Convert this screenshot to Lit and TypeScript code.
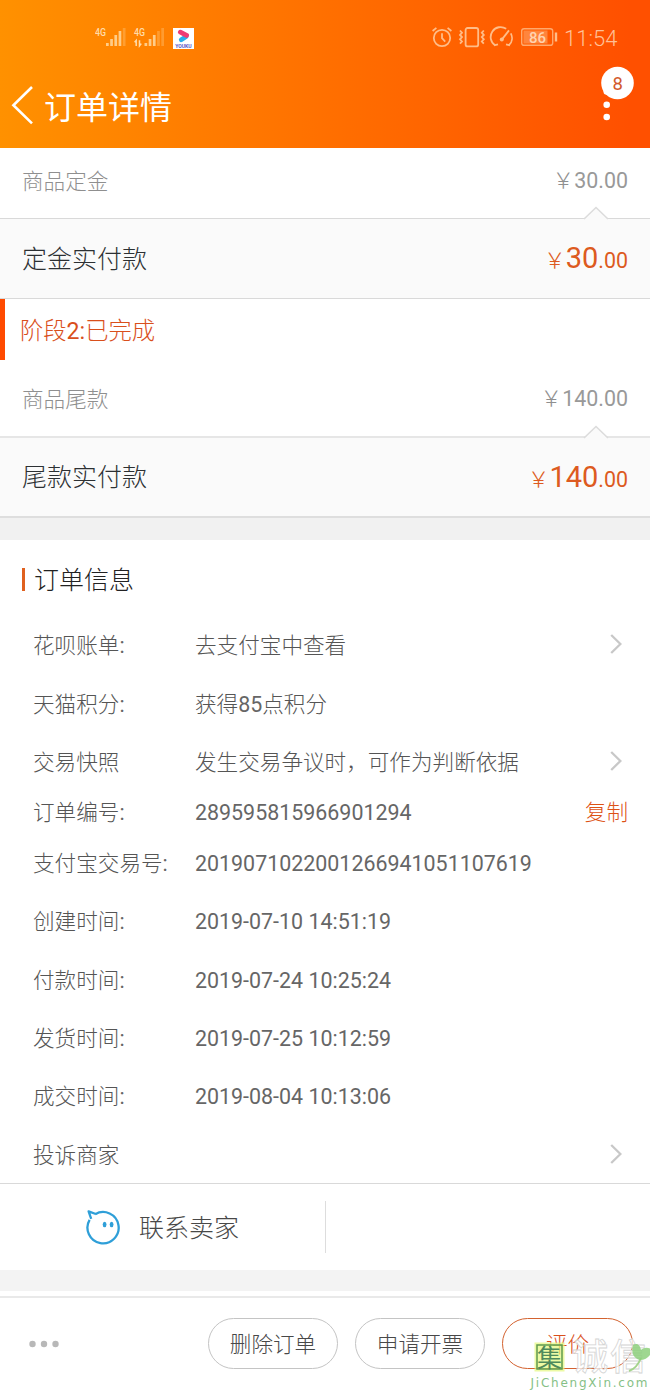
import { LitElement, html, css, svg, nothing } from "lit";
import { customElement, property } from "lit/decorators.js";
import { classMap } from "lit/directives/class-map.js";

const chevron = html`<svg class="chevron" width="12" height="20" viewBox="0 0 12 20">
  <path d="M1.2 1 10.4 10 1.2 19" fill="none" stroke="#c8c8c8" stroke-width="2.3" />
</svg>`;

const bars = (x: number, lit: number) => svg`${[3, 7, 11, 15, 18].map(
  (h, i) => svg`<rect x=${x + i * 4.2} y=${19 - h} width="2.7" height=${h} fill="#ffd9a0" opacity=${i < lit ? 0.85 : 0.3} />`
)}`;

// Latin runs are set in a heavier weight than the Chinese around them.
const mixed = (text: string) =>
  text
    .split(/([\x20-\x7e]+)/)
    .filter(Boolean)
    .map((part) => (/^[\x20-\x7e]/.test(part) ? html`<span class="latin">${part}</span>` : part));

const latin = css`
  .latin { font-weight: 400; font-size: 0.992em; }
`;

interface Row {
  label: string;
  value?: string;
  link?: boolean;
  copy?: boolean;
}

const ROWS: Row[] = [
  { label: "花呗账单:", value: "去支付宝中查看", link: true },
  { label: "天猫积分:", value: "获得85点积分" },
  { label: "交易快照", value: "发生交易争议时，可作为判断依据", link: true },
  { label: "订单编号:", value: "289595815966901294", copy: true },
  { label: "支付宝交易号:", value: "2019071022001266941051107619" },
  { label: "创建时间:", value: "2019-07-10 14:51:19" },
  { label: "付款时间:", value: "2019-07-24 10:25:24" },
  { label: "发货时间:", value: "2019-07-25 10:12:59" },
  { label: "成交时间:", value: "2019-08-04 10:13:06" },
  { label: "投诉商家", link: true },
];

@customElement("status-header")
class StatusHeader extends LitElement {
  static styles = css`
    :host {
      display: block;
      height: 148px;
      background: linear-gradient(90deg, #ff9100 0%, #ff5000 97%);
      color: #fff;
    }
    .status {
      display: flex;
      align-items: center;
      height: 76px;
      padding: 0 32px 0 95px;
      box-sizing: border-box;
    }
    .signals { display: block; }
    .net { font: 500 11.5px/1 Roboto, sans-serif; fill: #ffdcaa; }
    .app { margin-left: 7px; }
    .brand { font: 700 5px/1 Roboto, sans-serif; fill: #5a59c8; }
    .spacer { flex: 1; }
    .battery { font: 500 15px/1 Roboto, sans-serif; fill: #ffd3b0; }
    .clock {
      margin: 1px 0 0 6px;
      font-size: 22px;
      line-height: 24px;
      font-weight: 350;
      color: #ffc096;
      width: 54px;
      white-space: nowrap;
    }
    .bar {
      display: flex;
      align-items: center;
      height: 60px;
      padding: 0 16px 0 11px;
    }
    .title {
      margin: 3px 0 0 10px;
      font-size: 32px;
      line-height: 48px;
      font-weight: 400;
    }
    .more { display: block; align-self: flex-start; margin-top: -10px; }
    .count { font: 400 18.5px/1 Roboto, sans-serif; fill: #d2592b; }
  `;
  render() {
    return html`
      <div class="status">
        <svg class="signals" width="71" height="30" viewBox="0 -4 71 30">
          <text class="net" x="0" y="9" textLength="11" lengthAdjust="spacingAndGlyphs">4G</text>
          ${bars(11, 4)}
          <text class="net" x="39" y="9" textLength="11" lengthAdjust="spacingAndGlyphs">4G</text>
          <path d="M41.2 19v-5.5l-1.6 1.8M44.5 13.2v5.6l1.8-2.2" fill="none" stroke="#ffdcaa" stroke-width="1.5" />
          ${bars(49.5, 3)}
        </svg>
        <svg class="app" width="21" height="21" viewBox="0 0 21 21">
          <rect width="21" height="21" fill="#fff" />
          <path d="M13.2 8.6 8.2 11.8" stroke="#29aeea" stroke-width="4.6" stroke-linecap="round" />
          <path d="M7.4 4.2 13.6 7.4" stroke="#ee3c72" stroke-width="4.8" stroke-linecap="round" />
          <text class="brand" x="2.2" y="19.6" textLength="16.5" lengthAdjust="spacingAndGlyphs">YOUKU</text>
        </svg>
        <span class="spacer"></span>
        <svg width="128" height="24" viewBox="0 0 128 24" fill="none" stroke="#ffbd88" stroke-width="1.8">
          <circle cx="12" cy="12" r="8.2" />
          <path d="M12 7.2v5l3.2 3.4M2.6 5 6.4 1.9M21.4 5l-3.8-3.1" />
          <rect x="35.6" y="2" width="12.6" height="18.4" rx="2" />
          <path d="M30 4.5l2 2.2-2 2.2 2 2.2-2 2.2 2 2.2-2 2.2M53.8 4.5l-2 2.2 2 2.2-2 2.2 2 2.2-2 2.2 2 2.2" />
          <path d="M65 19.2A9.9 9.9 0 0 1 76.2 2.8M80.8 7.4A9.9 9.9 0 0 1 79 19.2M64 19.4l4-1M80 19.4l-4-1" />
          <path d="M72 13.4 79 4.4" />
          <circle cx="71.8" cy="13.6" r="2" fill="#ffbd88" stroke="none" />
          <rect x="91.7" y="2.7" width="31" height="16.6" rx="2.4" stroke-width="1.4" opacity=".8" />
          <rect x="93.5" y="4.5" width="24" height="13" fill="#ffb07a" stroke="none" opacity=".5" />
          <path d="M126 6.5v9" stroke-width="2.4" />
          <text class="battery" stroke="none" x="99" y="16.5">86</text>
        </svg>
        <span class="clock">11:54</span>
      </div>
      <div class="bar">
        <svg width="23" height="40" viewBox="0 0 23 40">
          <path d="M21 1 2.4 19.3 21 37.4" fill="none" stroke="#fff" stroke-width="2.6" />
        </svg>
        <h1 class="title">订单详情</h1>
        <span class="spacer"></span>
        <svg class="more" width="34" height="56" viewBox="0 0 34 56">
          <circle cx="17.5" cy="17" r="16.3" fill="#fff" />
          <circle cx="6.7" cy="25.4" r="3.2" fill="#fff" />
          <text class="count" x="17.8" y="23.8" text-anchor="middle">8</text>
          <circle cx="6.7" cy="38.8" r="3.3" fill="#fff" />
          <circle cx="6.7" cy="51" r="3.3" fill="#fff" />
        </svg>
      </div>
    `;
  }
}

@customElement("payment-block")
class PaymentBlock extends LitElement {
  @property() label = "";
  @property() paidLabel = "";
  @property() whole = "";
  @property({ type: Boolean }) soft = false;

  static styles = [
    latin,
    css`
      :host { display: block; }
      .due, .paid {
        display: flex;
        justify-content: space-between;
        align-items: center;
        padding: 0 22px;
        box-sizing: border-box;
      }
      .due {
        height: 70px;
        padding-bottom: 2px;
        color: #8f8f8f;
        font-size: 21.6px;
        line-height: 30px;
      }
      .amount { margin-top: -2px; }
      .paid {
        position: relative;
        height: 81px;
        padding-top: 2px;
        background: #fafafa;
        border-top: 1px solid #d9d9d9;
        border-bottom: 1px solid #d9d9d9;
        color: #2c3033;
        font-size: 25px;
        line-height: 36px;
      }
      .soft { border-top: 2px solid #e6e6e6; border-bottom: 2px solid #dedede; height: 82px; }
      .notch { position: absolute; right: 41px; top: -13px; }
      .total { color: #dd5a20; font-size: 21.6px; }
      .big { font-size: 29px; }
      .due .latin { color: #999; }
    `,
  ];
  render() {
    return html`
      <div class="due"><span>${this.label}</span><span class="amount">￥<span class="latin">${this.whole}.00</span></span></div>
      <div class=${classMap({ paid: true, soft: this.soft })}>
        <svg class="notch" width="26" height="14" viewBox="0 0 26 14">
          <path d="M1 13.5 13 1.5 25 13.5V14H1z" fill="#fafafa" />
          <path d="M1 13 13 1.5 25 13" fill="none" stroke="#dcdcdc" stroke-width="1.6" />
        </svg>
        <span>${this.paidLabel}</span>
        <span class="total">￥<span class="latin"><span class="big">${this.whole}</span>.00</span></span>
      </div>
    `;
  }
}

@customElement("order-info")
class OrderInfo extends LitElement {
  static styles = [
    latin,
    css`
      :host {
        display: block;
        box-sizing: border-box;
        height: 644px;
        border-bottom: 1px solid #d9d9d9;
      }
      .head {
        display: flex;
        align-items: center;
        height: 76px;
        box-sizing: border-box;
        padding: 6px 22px 0;
      }
      .mark { width: 3px; height: 23px; background: #e0611f; margin: -4px 9px 0 0; }
      .heading { margin: 0; font-size: 25px; line-height: 36px; font-weight: 300; color: #222; }
      .row {
        display: flex;
        align-items: center;
        height: 58.4px;
        padding: 0 28px 0 33px;
        font-size: 21.6px;
        line-height: 30px;
        color: #555;
        white-space: nowrap;
      }
      .row .latin { color: #666; }
      .short { height: 42.4px; padding-right: 22px; }
      .label, .value, .copy { padding-top: 2px; }
      .label { width: 162px; }
      .value { flex: 1; }
      .copy { color: #dd5215; }
      .chevron { margin-top: -2px; }
    `,
  ];
  render() {
    return html`
      <div class="head"><span class="mark"></span><h2 class="heading">订单信息</h2></div>
      ${ROWS.map(
        (r) => html`<div class=${classMap({ row: true, short: !!r.copy })}>
          <span class="label">${mixed(r.label)}</span>
          <span class="value">${r.value ? mixed(r.value) : nothing}</span>
          ${r.link ? chevron : nothing}${r.copy ? html`<span class="copy">复制</span>` : nothing}
        </div>`
      )}
    `;
  }
}

@customElement("app-root")
class AppRoot extends LitElement {
  static styles = [
    latin,
    css`
      :host {
        display: block;
        position: relative;
        height: 1390px;
        overflow: hidden;
        background: #fff;
        font-family: Roboto, "Noto Sans CJK SC", sans-serif;
        font-weight: 300;
      }
      .stage {
        height: 61px;
        box-sizing: border-box;
        border-left: 5.5px solid #ff4a00;
        padding: 2px 0 0 15px;
        font-size: 23.3px;
        line-height: 61px;
        color: #d94f1c;
      }
      .balance { padding-top: 6px; }
      .band { height: 22px; background: #f1f1f1; }
      .contact { display: flex; height: 86px; align-items: center; }
      .seller {
        display: flex;
        align-items: center;
        justify-content: center;
        width: 325px;
        height: 52px;
        border-right: 1px solid #ddd;
        font-size: 25px;
        line-height: 36px;
        color: #484848;
        gap: 17px;
      }
      .seller-name { padding-top: 4px; }
      .lower { height: 21px; background: #f3f3f3; margin-bottom: 5px; }
      .actions {
        display: flex;
        align-items: center;
        gap: 17px;
        height: 93px;
        box-sizing: border-box;
        border-top: 2px solid #e9e9e9;
        padding: 0 17px 0 28px;
      }
      .dots { margin-right: auto; }
      .button {
        width: 130px;
        height: 51px;
        box-sizing: border-box;
        border: 1px solid #c4c4c4;
        border-radius: 26px;
        background: #fff;
        font: inherit;
        font-size: 21.6px;
        line-height: 30px;
        color: #484848;
        padding: 2px 0 0;
        white-space: nowrap;
      }
      .primary { width: 131px; border: 1.5px solid #d3622f; color: #d94f1c; }
      .stamp { position: absolute; right: 0; bottom: 0; }
      .seal { font: 400 25px/1 "Noto Sans CJK SC", sans-serif; fill: #4f8a5c; }
      .ghost { font: 500 36px/1 "Noto Sans CJK SC", sans-serif; fill: #fff; fill-opacity: .75; stroke: #d4d4d4; stroke-width: .8; }
      .site { font: 400 12px/1 "DejaVu Sans", sans-serif; fill: #86bf86; }
    `,
  ];
  render() {
    return html`
      <status-header></status-header>
      <payment-block label="商品定金" paidLabel="定金实付款" whole="30"></payment-block>
      <div class="stage">${mixed("阶段2:已完成")}</div>
      <div class="balance">
        <payment-block label="商品尾款" paidLabel="尾款实付款" whole="140" soft></payment-block>
      </div>
      <div class="band"></div>
      <order-info></order-info>
      <div class="contact">
        <div class="seller">
          <svg width="36" height="36" viewBox="0 0 36 36" fill="none" stroke="#2f9fd8" stroke-width="2.3">
            <path d="M3.6 10.8A15.6 15.6 0 1 0 9.2 5.2" />
            <path d="M5.2 9.8 2.6 2.4 9.8 5" stroke-linejoin="round" />
            <ellipse cx="18.6" cy="15.5" rx="1.9" ry="2.7" fill="#2f9fd8" stroke="none" />
            <ellipse cx="25.6" cy="15.5" rx="1.9" ry="2.7" fill="#2f9fd8" stroke="none" />
          </svg>
          <span class="seller-name">联系卖家</span>
        </div>
      </div>
      <div class="lower"></div>
      <div class="actions">
        <svg class="dots" width="32" height="8" viewBox="0 0 32 8" fill="#b8b8b8">
          <circle cx="4.5" cy="4" r="3.2" /><circle cx="16" cy="4" r="3.2" /><circle cx="27.5" cy="4" r="3.2" />
        </svg>
        <button class="button">删除订单</button>
        <button class="button">申请开票</button>
        <button class="button primary">评价</button>
      </div>
      <svg class="stamp" width="122" height="72" viewBox="0 0 122 72">
        <rect x="6.5" y="24.5" width="30" height="29" fill="#e4f87e" fill-opacity=".7" />
        <rect x="9" y="27" width="25" height="24" fill="none" stroke="#5f9a4e" stroke-width="1.5" />
        <text class="seal" x="9" y="48.5">集</text>
        <text class="ghost" x="44" y="52">诚</text>
        <text class="ghost" x="82" y="52">信</text>
        <path d="M101 53c6-2 10-8 12-13" fill="none" stroke="#a4d48c" stroke-width="2" />
        <path d="M112 42c-7-2-9-8-7-15 3-2 7-1 8 5 3-3 8-3 11 0-1 6-6 10-12 10z" fill="#8ed07c" fill-opacity=".85" />
        <text class="site" x="2.5" y="69" textLength="117">JiChengXin.com</text>
      </svg>
    `;
  }
}
